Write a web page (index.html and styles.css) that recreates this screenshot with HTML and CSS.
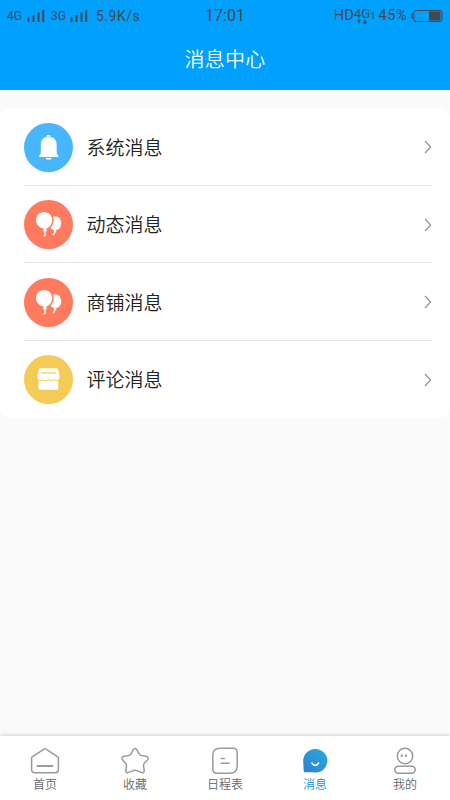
FILE: index.html
```html
<!DOCTYPE html>
<html lang="zh-CN">
<head>
<meta charset="utf-8">
<title>消息中心</title>
<link rel="stylesheet" href="styles.css">
</head>
<body>
<svg class="defs" width="0" height="0" aria-hidden="true">
  <symbol id="signal" viewBox="0 0 18 14"><path d="M1.500 8.500V13M6.500 6V13M11.500 3.500V13M16.200 1V13" stroke="currentColor" stroke-width="2" fill="none"/></symbol>
  <symbol id="balloons" viewBox="0 0 48 48">
    <ellipse cx="30.600" cy="22.800" rx="5.900" ry="6.800" fill="#fff"/>
    <path d="M30.500 28l1.400 3h-3z" fill="#fff"/>
    <path d="M30.300 30.500c.8 2.200-1.300 1.800-1.600 4" fill="none" stroke="#fff" stroke-width="1.300"/>
    <ellipse cx="19.700" cy="19.700" rx="9.500" ry="9.800" fill="#ff7b5f"/>
    <path d="M19.700 11.700c4.500 0 8 3.500 8 7.900 0 4.100-2.800 7.400-6.200 8.500l1.200 2.600h-4.200l1-2.500c-4.200-.8-7.800-4.500-7.800-8.600 0-4.400 3.500-7.900 8-7.900z" fill="#fff"/>
    <path d="M20.500 30.200c-1.200 2.300 1.300 2.700.2 4.100-.3.500-.9.800-1.500.9" fill="none" stroke="#fff" stroke-width="1.400"/>
  </symbol>
  <symbol id="chevron" viewBox="0 0 8 14"><path d="M1 1l5.600 6L1 13" fill="none" stroke="#929292" stroke-width="1.200"/></symbol>
</svg>
<div class="app">
  <header class="top">
    <div class="status">
      <div class="status-left">
        <span class="net">4G</span><svg class="signal"><use href="#signal"/></svg>
        <span class="net second">3G</span><svg class="signal"><use href="#signal"/></svg>
        <span class="speed">5.9K/s</span>
      </div>
      <span class="time">17:01</span>
      <div class="status-right">
        <span class="hd">HD</span>
        <span class="mobile"><span>4G</span><svg width="12" height="5" viewBox="0 0 12 5"><path d="M1 .5h4L3 4.500zM7 4.500h4L9 .5z" fill="currentColor"/></svg></span>
        <span class="one">1</span>
        <span class="percent">45%</span>
        <svg class="battery" width="32" height="14" viewBox="0 0 32 14"><rect x="3" y="1.500" width="28" height="11" rx="2" fill="none" stroke="currentColor"/><path d="M2.500 5H1v4h1.500" fill="none" stroke="currentColor" stroke-width="1.200"/><path d="M18 2.500h11.500v9H18z" fill="currentColor"/></svg>
      </div>
    </div>
    <h1>消息中心</h1>
  </header>
  <main>
    <ul class="card">
      <li>
        <svg class="badge blue" viewBox="0 0 48 48"><path d="M22 13c0-1.600 4-1.600 4 0v.5c3.700.9 6 3.800 6 7.500v7.500c0 1.800.5 2.300 1.500 3.200v1.500H15v-1.500c1-.9 1.500-1.400 1.500-3.200V21c0-3.700 2.300-6.600 5.500-7.500z" fill="#fff"/><path d="M21.500 13.900h5" stroke="#48b5ff" stroke-width=".5"/><path d="M22.300 35h3.800" stroke="#fff" stroke-width="1.600" stroke-linecap="round"/></svg>
        <span class="label">系统消息</span><svg class="arrow"><use href="#chevron"/></svg>
      </li>
      <li>
        <svg class="badge coral" viewBox="0 0 48 48"><use href="#balloons"/></svg>
        <span class="label">动态消息</span><svg class="arrow"><use href="#chevron"/></svg>
      </li>
      <li>
        <svg class="badge coral" viewBox="0 0 48 48"><use href="#balloons"/></svg>
        <span class="label">商铺消息</span><svg class="arrow"><use href="#chevron"/></svg>
      </li>
      <li>
        <svg class="badge yellow" viewBox="0 0 48 48"><rect x="14.200" y="22" width="19.300" height="12" rx="1.300" fill="#fff"/><path d="M16.500 13h15c1 0 1.600.4 1.900 1.300l1.400 5.700v1.700c0 3-3.700 3.700-5.300 1.500-1.400 2.200-4.100 2.200-5.500 0-1.400 2.200-4.100 2.200-5.500 0-1.600 2.200-5.300 1.500-5.300-1.500V20l1.400-5.700c.3-.9 1-1.300 1.900-1.300z" fill="#fff" stroke="#f5cb58" stroke-width="1.800" paint-order="stroke"/><path d="M17.300 17.600H30.700" stroke="#f5cb58" stroke-width="1.200" stroke-linecap="round"/></svg>
        <span class="label">评论消息</span><svg class="arrow"><use href="#chevron"/></svg>
      </li>
    </ul>
  </main>
  <nav>
    <a><svg viewBox="0 0 30 30"><path d="M15 2.800c.3 0 .7.200 1 .4l11.400 7.300c.7.500 1 .9 1 1.800v11.200c0 2-1.200 3.200-3.200 3.200H4.800c-2 0-3.200-1.200-3.200-3.200V12.300c0-.9.300-1.300 1-1.800L14 3.200c.3-.2.700-.4 1-.4z"/><path d="M7.500 20H22.500" stroke-width="1.800" stroke-linecap="round"/></svg><span>首页</span></a>
    <a><svg viewBox="0 0 30 30"><path d="M13.300 3.700c.8-1.500 2.600-1.500 3.400 0l2.300 4.200c.5.900 1.200 1.300 2.200 1.500l4.900.8c2 .4 2.600 2.200 1.300 3.700l-3.200 3.500c-.7.800-.9 1.500-.7 2.500l.7 4.200c.3 2-1.100 3.100-2.900 2.300l-4.300-1.800c-1.300-.6-2.700-.6-4 0l-4.300 1.800c-1.800.8-3.200-.3-2.900-2.300l.7-4.200c.2-1 0-1.700-.7-2.500l-3.200-3.500c-1.300-1.500-.7-3.300 1.300-3.700l4.900-.8c1-.2 1.700-.6 2.200-1.500z"/></svg><span>收藏</span></a>
    <a><svg viewBox="0 0 30 30"><path d="M10 2.300h13c2.600 0 4.200 1.600 4.200 4.200v13.200c0 4.700-2.800 7.500-7.500 7.500H7c-2.600 0-4.200-1.600-4.200-4.200V9.500c0-4.700 2.500-7.200 7.200-7.200z"/><path d="M11.300 12.500h3M11.300 17.300h7.800" stroke-width="1.600" stroke-linecap="round"/></svg><span>日程表</span></a>
    <a class="active"><svg viewBox="0 0 30 30"><defs><linearGradient id="bubble" x1="1" y1="0" x2="0" y2="1"><stop offset="0" stop-color="#2cabe4"/><stop offset="1" stop-color="#2f7fcb"/></linearGradient></defs><path d="M15.200 3a12 11.800 0 1 1-2.500 23.300H5.200c-1 0-1.500-.5-1.500-1.500L3.200 15a12 12 0 0 1 12-12z" fill="url(#bubble)" stroke="none"/><path d="M12 17.200c1.500 2.800 5 2.800 6.500 0" stroke="#fff" stroke-width="1.700" stroke-linecap="round"/></svg><span>消息</span></a>
    <a><svg viewBox="0 0 30 30"><circle cx="15" cy="10" r="7.700"/><path d="M11.700 8.500v2.400M16 8.500v2.400" stroke-width="1.800"/><rect x="4.800" y="20.300" width="20.400" height="7" rx="3.500"/></svg><span>我的</span></a>
  </nav>
</div>
</body>
</html>
```

FILE: styles.css
```css
* { box-sizing: border-box; }
body { margin: 0; font-family: "Noto Sans CJK SC", sans-serif; font-weight: 350; background: #fafafa; }
.defs { position: absolute; }
.app { width: 450px; height: 800px; display: flex; flex-direction: column; overflow: hidden; }
.top { height: 90px; background: #00a0ff; }
.status { height: 30px; display: grid; grid-template-columns: 1fr 40px 1fr; align-items: center; padding: 1px 7px 0; color: #45494e; font-family: Roboto, sans-serif; font-weight: 400; line-height: 16px; }
.status-left, .status-right { display: flex; align-items: center; white-space: nowrap; }
.status-right { justify-content: flex-end; }
.net { font-size: 12px; width: 20px; }
.net.second { margin-left: 6px; width: 19px; }
.signal { width: 18px; height: 14px; }
.speed { font-size: 14px; margin-left: 8px; letter-spacing: .5px; }
.time { font-size: 16px; text-align: center; }
.hd { font-size: 14.500px; }
.mobile { display: flex; flex-direction: column; align-items: center; font-size: 13.500px; line-height: 12px; }
.one { font-size: 9px; font-weight: 500; }
.percent { font-size: 14.500px; margin: 0 4px 0 3px; letter-spacing: .5px; }
h1 { margin: 0; color: #fff; text-align: center; font-size: 20px; font-weight: 350; line-height: 58px; letter-spacing: .2px; }
main { flex: 1; padding-top: 18px; }
.card { list-style: none; margin: 0; padding: 0 18px 0 24px; height: 310px; border-radius: 10px; background: #fff; display: grid; grid-template-rows: repeat(4, 1fr); }
.card li { display: flex; align-items: center; padding-top: 2px; border-bottom: 1px solid #e8e8e8; }
.card li:last-child { border-bottom-color: transparent; }
.badge { width: 49px; height: 49px; border-radius: 50%; }
.blue { background: #48b5ff; }
.coral { background: #ff7b5f; }
.yellow { background: #f5cb58; }
.label { flex: 1; margin: -1px 0 0 13.500px; font-size: 19px; line-height: 28px; color: #222; }
.arrow { width: 8px; height: 14px; }
nav { height: 64px; background: #fff; display: grid; grid-template-columns: repeat(5, 1fr); box-shadow: 0 -1px 4px rgba(0, 0, 0, .16); }
nav a { display: flex; flex-direction: column; align-items: center; padding-top: 10px; font-size: 12px; line-height: 15px; color: #666; }
nav svg { width: 30px; height: 30px; fill: none; stroke: #9a9a9a; stroke-width: 1.500; }
.active { color: #1296db; }
```
